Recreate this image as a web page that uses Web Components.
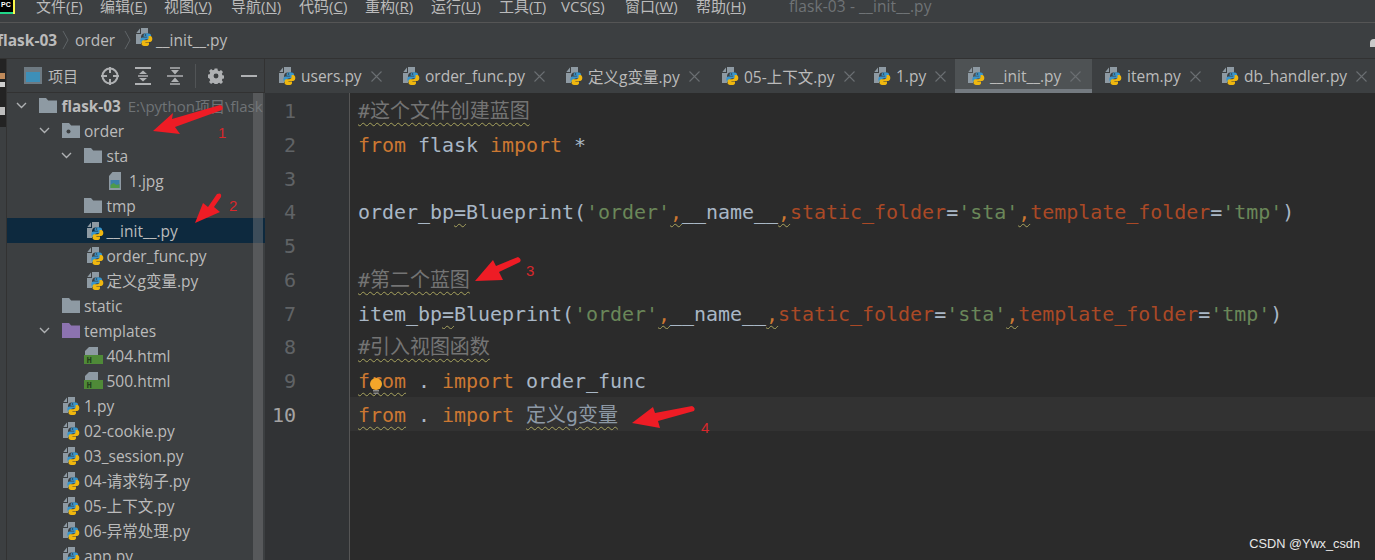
<!DOCTYPE html>
<html lang="zh"><head><meta charset="utf-8"><title>flask-03</title>
<style>
html,body{margin:0;padding:0;background:#3c3f41;overflow:hidden}
body{width:1375px;height:560px;position:relative;font-family:"Open Sans","Noto Sans CJK SC",sans-serif}
</style></head><body>
<ide-app>
  <menu-bar slot="menu"></menu-bar>
  <crumb-bar slot="crumb"></crumb-bar>
  <side-strip slot="strip"></side-strip>
  <project-head slot="phead"></project-head>
  <project-tree slot="tree">
    <tree-row depth="0" chev icon="folder" bold note="E:\python项目\flask">flask-03</tree-row>
    <tree-row depth="1" chev icon="source">order</tree-row>
    <tree-row depth="2" chev icon="folder">sta</tree-row>
    <tree-row depth="3" icon="jpg">1.jpg</tree-row>
    <tree-row depth="2" icon="folder">tmp</tree-row>
    <tree-row depth="2" icon="py" selected>__init__.py</tree-row>
    <tree-row depth="2" icon="py">order_func.py</tree-row>
    <tree-row depth="2" icon="py">定义g变量.py</tree-row>
    <tree-row depth="1" icon="folder">static</tree-row>
    <tree-row depth="1" chev icon="purple">templates</tree-row>
    <tree-row depth="2" icon="html">404.html</tree-row>
    <tree-row depth="2" icon="html">500.html</tree-row>
    <tree-row depth="1" icon="py">1.py</tree-row>
    <tree-row depth="1" icon="py">02-cookie.py</tree-row>
    <tree-row depth="1" icon="py">03_session.py</tree-row>
    <tree-row depth="1" icon="py">04-请求钩子.py</tree-row>
    <tree-row depth="1" icon="py">05-上下文.py</tree-row>
    <tree-row depth="1" icon="py">06-异常处理.py</tree-row>
    <tree-row depth="1" icon="py">app.py</tree-row>
  </project-tree>
  <tab-bar slot="tabs">
    <file-tab w="124">users.py</file-tab>
    <file-tab w="163">order_func.py</file-tab>
    <file-tab w="156">定义g变量.py</file-tab>
    <file-tab w="152">05-上下文.py</file-tab>
    <file-tab w="94">1.py</file-tab>
    <file-tab w="137" active>__init__.py</file-tab>
    <file-tab w="117">item.py</file-tab>
    <file-tab w="166">db_handler.py</file-tab>
  </tab-bar>
  <code-view slot="code">
    <code-line n="1"><span class="c w">#这个文件创建蓝图</span></code-line>
    <code-line n="2"><span class="k">from</span> flask <span class="k">import</span> *</code-line>
    <code-line n="3"></code-line>
    <code-line n="4">order_bp<span class="w">=</span>Blueprint(<span class="s">'order'</span><span class="k w">,</span>__name__<span class="k w">,</span><span class="p">static_folder</span>=<span class="s">'sta'</span><span class="k w">,</span><span class="p">template_folder</span>=<span class="s">'tmp'</span>)</code-line>
    <code-line n="5"></code-line>
    <code-line n="6"><span class="c w">#第二个蓝图</span></code-line>
    <code-line n="7">item_bp<span class="w">=</span>Blueprint(<span class="s">'order'</span><span class="k w">,</span>__name__<span class="k w">,</span><span class="p">static_folder</span>=<span class="s">'sta'</span><span class="k w">,</span><span class="p">template_folder</span>=<span class="s">'tmp'</span>)</code-line>
    <code-line n="8"><span class="c w">#引入视图函数</span></code-line>
    <code-line n="9"><span class="k w">from</span> . <span class="k">import</span> order_func</code-line>
    <code-line n="10" current><span class="k w">from</span> . <span class="k">import</span> <span class="w m">定义g变量</span></code-line>
  </code-view>
  <red-marks slot="marks"></red-marks>
</ide-app>
<script>
const ICONS={
py:`<svg width="17" height="18" viewBox="0 0 17 18"><path fill="#8e9aa3" d="M5 0h7v5.5H8.5C6 5.500 5 7.500 5 9.500V16H0V6h5z"/><path fill="#8e9aa3" d="M4 .6V5H.3z"/><path fill="#3a95cb" d="M11 5.200c-2.400 0-3.400.8-3.400 2.100v1.500h3.600v.7H6.300C5 9.500 4.300 10.700 4.300 12.300c0 1.600.7 3 2 3H8v-2c0-1.300 1-2.100 2.300-2.100h3c1 0 1.700-.8 1.700-1.800V7.300C15 6 13.400 5.200 11 5.200z"/><path fill="#efb70f" transform="rotate(180 10.300 11.700)" d="M11 5.200c-2.400 0-3.400.8-3.400 2.100v1.500h3.600v.7H6.300C5 9.500 4.300 10.700 4.300 12.300c0 1.600.7 3 2 3H8v-2c0-1.300 1-2.100 2.300-2.100h3c1 0 1.700-.8 1.700-1.800V7.300C15 6 13.400 5.200 11 5.200z"/><circle cx="9.500" cy="7" r=".8" fill="#2b3a44"/></svg>`,
folder:`<svg width="18" height="15" viewBox="0 0 18 15"><path fill="#8e9aa3" d="M0 0h7l2.200 2.500H18V15H0z"/></svg>`,
source:`<svg width="18" height="15" viewBox="0 0 18 15"><path fill="#8e9aa3" d="M0 0h7l2.200 2.500H18V15H0z"/><circle cx="6.500" cy="8.500" r="2" fill="#3c3f41"/></svg>`,
purple:`<svg width="18" height="15" viewBox="0 0 18 15"><path fill="#8c73b0" d="M0 0h7l2.200 2.500H18V15H0z"/></svg>`,
jpg:`<svg width="13" height="18" viewBox="0 0 13 18"><path fill="#8e9aa3" d="M3.500 0H12v18H0V4z"/><rect x="1.500" y="8" width="9" height="8" fill="#3b7fa8"/><path fill="#4f9a4a" d="M1.500 16v-3l3-2 3 2 3-1v4z"/></svg>`,
html:`<svg width="19" height="17" viewBox="0 0 19 17"><path fill="#8e9aa3" d="M5 0h9v9H1V4z"/><rect x="0" y="8" width="19" height="9" fill="#4f8a38"/><text x="2.500" y="16" font-family="Liberation Mono,monospace" font-weight="700" font-size="9" fill="#24401c">H</text></svg>`
};
class Base extends HTMLElement{
  render(html){ if(!this.shadowRoot) this.attachShadow({mode:'open'}); this.shadowRoot.innerHTML=html; }
}
customElements.define('ide-app',class extends Base{connectedCallback(){this.render(`<style>
:host{display:grid;grid-template-rows:23px 36px 1fr;width:1375px;height:560px;overflow:hidden;position:relative;background:#3c3f41;color:#bbb}
.main{display:flex;min-height:0}
.panel{width:258px;display:flex;flex-direction:column;flex:none;position:relative;min-height:0}
.editor{flex:1;display:flex;flex-direction:column;min-width:0}
.wm{position:absolute;right:15px;bottom:9px;font:12.750px "Liberation Sans",sans-serif;color:#e8e8e8}
</style>
<slot name="menu"></slot><slot name="crumb"></slot>
<div class="main"><slot name="strip"></slot>
<div class="panel"><slot name="phead"></slot><slot name="tree"></slot></div>
<div class="editor"><slot name="tabs"></slot><slot name="code"></slot></div></div>
<slot name="marks"></slot><span class="wm">CSDN @Ywx_csdn</span>`);}});

customElements.define('menu-bar',class extends Base{connectedCallback(){
const m=[['文件(',"F",')'],['编辑(',"E",')'],['视图(',"V",')'],['导航(',"N",')'],['代码(',"C",')'],['重构(',"R",')'],['运行(',"U",')'],['工具(',"T",')'],['VCS(',"S",')'],['窗口(',"W",')'],['帮助(',"H",')']];
let widths=[64,64,67,68,66,66,68,62,64,71];
this.render(`<style>:host{display:flex;height:22px;border-bottom:1px solid #555;box-sizing:content-box;overflow:hidden;padding-left:36px;font-size:15px;color:#bbb;background:#3c3f41;line-height:12px}
span{flex:none;white-space:nowrap}u{text-underline-offset:1px}.t{color:#6f7376;margin-left:26px;font-size:15.500px;letter-spacing:.1px}
.logo{position:absolute;left:0;top:0}</style>
<svg class="logo" width="16" height="15" viewBox="0 0 16 15"><path fill="#21d789" d="M0 12h14v2H0z"/><path fill="#fcf84a" d="M13 0h2v14h-2z"/><rect width="13" height="12" fill="#000"/><text x="1" y="7" font-family="Liberation Sans,sans-serif" font-weight="700" font-size="7" fill="#fff">PC</text></svg>
${m.map((x,i)=>`<span style="width:${widths[i]||67}px">${x[0]}<u>${x[1]}</u>${x[2]}</span>`).join('')}<span class="t">flask-03 - __init__.py</span>`);}});

customElements.define('crumb-bar',class extends Base{connectedCallback(){this.render(`<style>:host{display:flex;align-items:center;box-sizing:border-box;padding-bottom:2px;height:36px;border-bottom:1px solid #323232;font-size:15.500px;color:#bbb;background:#3c3f41;position:relative;overflow:hidden}
b{margin-left:-3px;font-weight:700;width:58px;flex:none;white-space:nowrap}
.c{margin:0 6px 0 7px;flex:none}.o{width:41px;flex:none}.ic{display:block;margin:0 3px 0 0}
.u{position:absolute;right:-3px;top:16px;width:8px;height:8px;background:#c9c9c9;border-radius:4px 4px 0 0}</style>
<b>flask-03</b><svg class="c" width="7" height="20" viewBox="0 0 7 20"><path d="M1 1l5 9-5 9" fill="none" stroke="#5f6467"/></svg>
<span class="o">order</span><svg class="c" style="margin-left:8px;margin-right:5px" width="7" height="20" viewBox="0 0 7 20"><path d="M1 1l5 9-5 9" fill="none" stroke="#5f6467"/></svg>
<span class="ic">${ICONS.py}</span><span>__init__.py</span><i class="u"></i>`);}});

customElements.define('side-strip',class extends Base{connectedCallback(){this.render(`<style>:host{display:block;width:6px;border-right:1px solid #323232;flex:none;background:#3c3f41}
.b{height:68px;background:#232323;position:relative}i{position:absolute;left:0;width:5px}</style>
<div class="b"><i style="top:14px;height:6px;background:#c08a5a"></i><i style="top:23px;height:5px;background:#cfcfcf"></i><i style="top:48px;height:8px;background:#bdbdbd"></i></div>`);}});

customElements.define('project-head',class extends Base{connectedCallback(){this.render(`<style>:host{display:flex;align-items:center;height:33px;flex:none;border-bottom:1px solid #323232;border-right:1px solid #323232;box-sizing:content-box;font-size:15px;color:#bbb}
svg{display:block;flex:none}.l{width:29px;margin-left:6px;white-space:nowrap}</style>
<svg style="margin-left:17px" width="18" height="17" viewBox="0 0 18 17"><rect width="18" height="17" fill="#6e7a82"/><rect x="2" y="5" width="14" height="10" fill="#3d8fb8"/></svg>
<span class="l">项目</span>
<svg style="margin-left:24px" width="18" height="18" viewBox="0 0 18 18" fill="none" stroke="#afb1b3" stroke-width="2"><circle cx="9" cy="9" r="7.500"/><path d="M9 0v6M9 12v6M0 9h6M12 9h6"/></svg>
<svg style="margin-left:16px" width="16" height="18" viewBox="0 0 16 18"><path d="M0 1h16M0 17h16" stroke="#afb1b3" stroke-width="2"/><path fill="#afb1b3" d="M8 3.500l4 3.500H4zM8 14.500L4 11h8z"/><path d="M3 9h10" stroke="#afb1b3" stroke-width="1.500"/></svg>
<svg style="margin-left:16px" width="16" height="18" viewBox="0 0 16 18"><path d="M0 9h16" stroke="#afb1b3" stroke-width="1.500"/><path fill="#afb1b3" d="M8 7.500L4 3h8zM8 10.500l4 4.500H4z"/><path d="M3 1h10M3 17h10" stroke="#afb1b3" stroke-width="1.500"/></svg>
<svg style="margin-left:12px" width="1" height="24"><rect width="1" height="24" fill="#515456"/></svg>
<svg style="margin-left:12px" width="16" height="16" viewBox="0 0 16 16"><path fill="#afb1b3" fill-rule="evenodd" d="M6.500 0h3l.4 2.200 1.500.6 1.900-1.200 2.100 2.100-1.200 1.900.6 1.500 2.200.4v3l-2.200.4-.6 1.500 1.200 1.900-2.100 2.100-1.900-1.200-1.500.6-.4 2.200h-3l-.4-2.200-1.500-.6-1.900 1.200-2.100-2.100 1.200-1.900-.6-1.500L-1 9.500v-3l2.200-.4.6-1.500L.6 2.700l2.100-2.100 1.900 1.200 1.500-.6zM8 5.400a2.600 2.600 0 1 0 0 5.200 2.600 2.600 0 0 0 0-5.200z" transform="translate(.5 .5) scale(.94)"/></svg>
<svg style="margin-left:17px" width="16" height="2"><rect width="16" height="2" fill="#afb1b3"/></svg>`);}});

customElements.define('project-tree',class extends Base{connectedCallback(){this.render(`<style>:host{display:block;position:relative;flex:1;overflow:hidden;min-height:0}
.sb{position:absolute;left:246px;top:0;bottom:0;width:10px;background:rgba(120,122,124,.45)}</style><slot></slot><div class="sb"></div>`);}});

customElements.define('tree-row',class extends Base{connectedCallback(){
const d=+this.getAttribute('depth'),ic=this.getAttribute('icon');
const off={py:d==1?1.5:3,jpg:2.5}[ic]||0;
const note=this.getAttribute('note');
this.render(`<style>:host{display:flex;align-items:center;height:25px;width:258px;box-sizing:border-box;padding-left:${9+22.5*d}px;font-size:15.500px;color:#bbb;white-space:nowrap;overflow:hidden}
:host([selected]){background:#0d293e}
.ch{width:23px;flex:none;display:block}.ic{width:22.500px;flex:none;display:flex;align-items:center;padding-left:${off}px;box-sizing:border-box}
.t{flex:none}:host([bold]) .t{font-weight:700;font-size:15.250px}.n{color:#6f7376;margin-left:7px;flex:none;font-size:15px}svg{display:block;flex:none}</style>
<span class="ch">${this.hasAttribute('chev')?`<svg width="11" height="7" viewBox="0 0 11 7"><path d="M1 1l4.500 4.500L10 1" fill="none" stroke="#afb1b3" stroke-width="1.400"/></svg>`:''}</span>
<span class="ic">${ICONS[ic]}</span><span class="t"><slot></slot></span>${note?`<span class="n">${note}</span>`:''}`);}});

customElements.define('tab-bar',class extends Base{connectedCallback(){this.render(`<style>:host{display:flex;height:34px;flex:none;padding-left:1px;overflow:hidden;background:#3c3f41;box-sizing:border-box}</style><slot></slot>`);}});

customElements.define('file-tab',class extends Base{connectedCallback(){this.render(`<style>:host{display:flex;align-items:center;flex:none;box-sizing:border-box;width:${this.getAttribute('w')}px;padding-left:13px;height:34px;font-size:15.500px;color:#bbb;white-space:nowrap;position:relative}
:host([active]){background:#4e5254;border-bottom:4px solid #747a80;padding-top:4px}
.ic{display:block;margin-right:5px;flex:none}.ic svg{display:block}.t{flex:none}
.x{margin-left:9px;flex:none;display:block}</style>
<span class="ic">${ICONS.py}</span><span class="t"><slot></slot></span>
<svg class="x" width="11" height="11" viewBox="0 0 11 11"><path d="M.5.500l10 10M10.500.500l-10 10" stroke="#6b6f72" stroke-width="1.100"/></svg>`);}});

customElements.define('code-view',class extends Base{connectedCallback(){this.render(`<style>:host{display:block;flex:1;position:relative;background:linear-gradient(to right,#313335 84px,#555 84px,#555 85px,#2b2b2b 85px);overflow:hidden;min-height:0}
.bulb{position:absolute;left:104px;top:284px}</style><slot></slot>
<svg class="bulb" width="14" height="18" viewBox="0 0 14 18"><circle cx="7" cy="7" r="6" fill="#f4a62a"/><rect x="4" y="13" width="6" height="1.500" fill="#8a8a8a"/><rect x="4.500" y="15.500" width="5" height="1.500" fill="#8a8a8a"/></svg>`);}});

customElements.define('code-line',class extends Base{connectedCallback(){this.render(`<style>:host{display:flex;height:33.750px;font:20px/33.750px "DejaVu Sans Mono","Noto Sans CJK SC",monospace;letter-spacing:-.04px;color:#a9b7c6;white-space:pre}
.n{width:31px;text-align:right;flex:none;color:#606366;margin-right:53px;padding-top:2px;box-sizing:border-box}:host([current]) .n{color:#a4a3a3}
.g{width:1px;flex:none}
.c{flex:1;padding-left:8px;padding-top:2px;box-sizing:border-box;min-width:0;overflow:hidden}:host([current]) .c{background:#323232}
::slotted(.k){color:#cc7832}::slotted(.s){color:#6a8759}::slotted(.p){color:#aa4926}::slotted(.c){color:#747474}::slotted(.m){color:#8d99a5}
::slotted(.w){text-decoration:underline wavy #a8a35e 1px;text-underline-offset:4px}</style>
<span class="n">${this.getAttribute('n')}</span><span class="g"></span><div class="c"><slot></slot></div>`);}});

customElements.define('red-marks',class extends Base{connectedCallback(){this.render(`<style>:host{position:absolute;left:0;top:0;width:1375px;height:560px;pointer-events:none}
svg{position:absolute;left:0;top:0}
span{position:absolute;font:15px "Liberation Sans",sans-serif;color:#d8282c}</style>
<svg width="1375" height="560" fill="#ee1c25">
<path d="M153 131L173 113 172 119 220 105Q224 106 222 110L175 127 180 134z"/>
<path d="M195 223L203 203 208 207 217 194Q222 192 221 197L214 207 220 212z"/>
<path d="M475 281L493 260 496 266 518 257Q522 259 520 262L499 272 503 280z"/>
<path d="M632 423L653 407 655 413 692 406Q696 408 694 411L658 421 660 428z"/>
</svg>
<span style="left:218px;top:124px">1</span><span style="left:229px;top:197px">2</span><span style="left:526px;top:262px">3</span><span style="left:701px;top:419px">4</span>`);}});
</script>
</body></html>
